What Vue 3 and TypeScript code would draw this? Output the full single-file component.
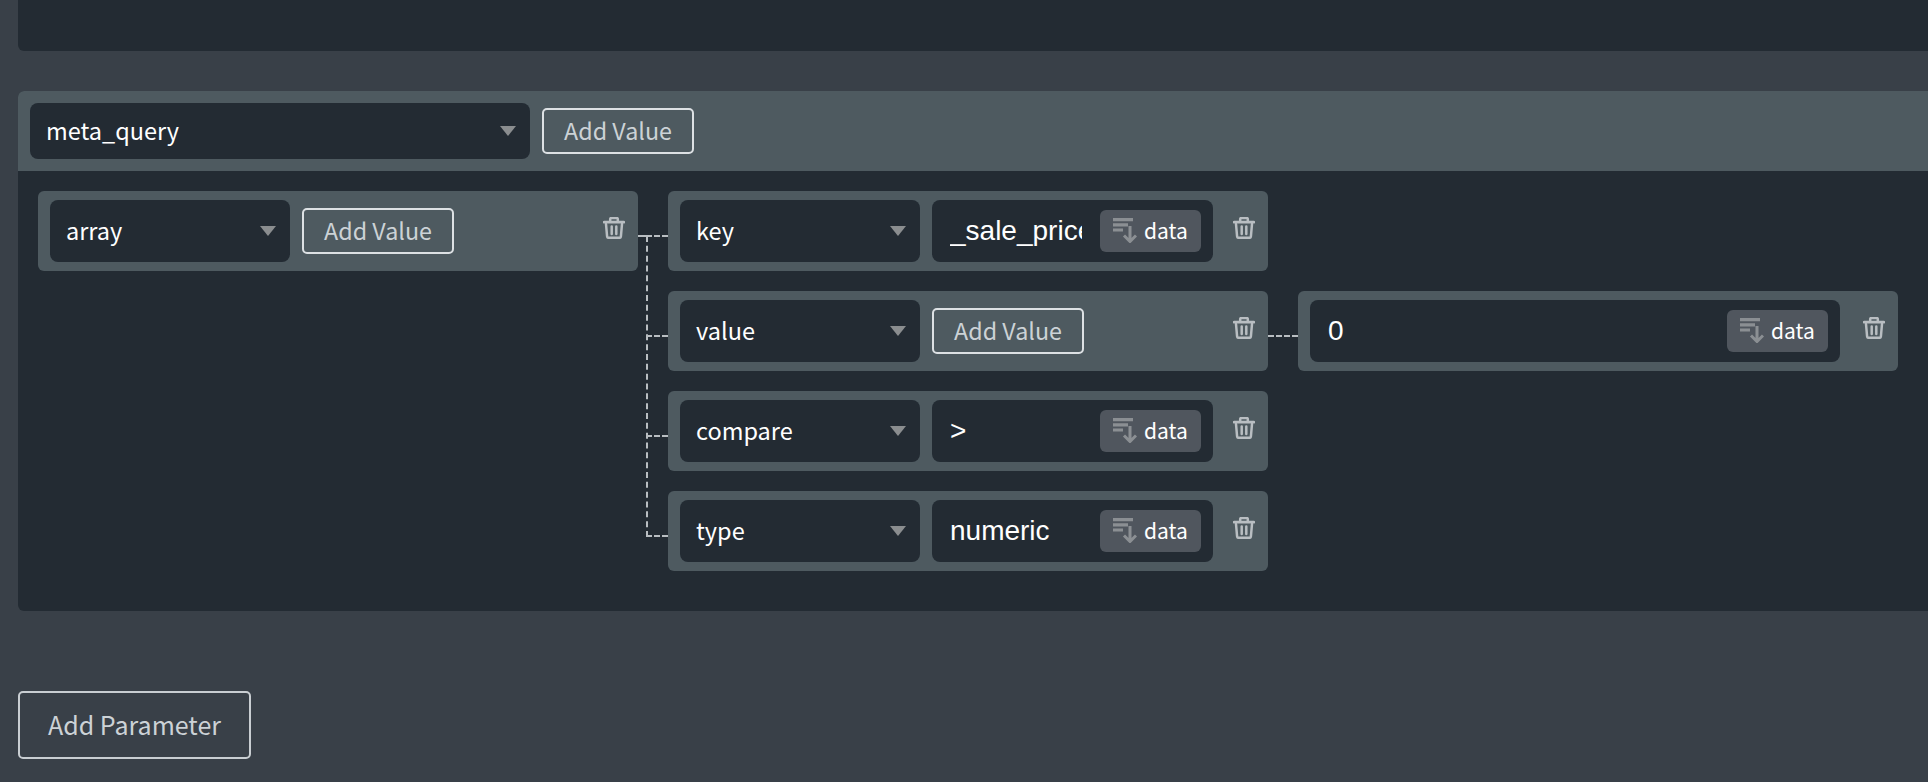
<script setup lang="ts">
interface Field {
  name: string
  value?: string
  child?: string
  addOnly?: boolean
}

const fields: Field[] = [
  { name: 'key', value: '_sale_price' },
  { name: 'value', addOnly: true, child: '0' },
  { name: 'compare', value: '>' },
  { name: 'type', value: 'numeric' },
]
</script>

<template>
  <div class="page">
    <svg class="defs" aria-hidden="true">
      <symbol id="icon-trash" viewBox="0 0 22 22">
        <path class="line" d="M7.200 4V2.100a1 1 0 0 1 1-1h5.600a1 1 0 0 1 1 1V4" />
        <path class="line thick" d="M1.200 5.200h19.600" />
        <path class="line" d="M3 7l1.100 12.500a1.400 1.400 0 0 0 1.400 1.300h11a1.400 1.400 0 0 0 1.400-1.300L19 7" />
        <path class="line" d="M8.700 9.500v7.500M13.300 9.500v7.500" />
      </symbol>
      <symbol id="icon-data" viewBox="0 0 24 25">
        <path class="solid" d="M0 0h20v3.200H0zM0 5.200h15v3.200H0zM0 10.400h10v3.200H0z" />
        <path class="line arrow" d="M17 8v15.500M11 17.500l6 6 6-6" />
      </symbol>
    </svg>

    <div class="panel panel-top"></div>

    <section class="panel panel-query">
      <header class="query-head">
        <div class="select select-wide">meta_query<i class="caret"></i></div>
        <button class="add">Add Value</button>
      </header>

      <div class="tree">
        <div class="node">
          <div class="select">array<i class="caret"></i></div>
          <button class="add">Add Value</button>
          <svg class="trash"><use href="#icon-trash" /></svg>
        </div>

        <div class="branches">
          <div v-for="field in fields" :key="field.name" class="branch">
            <div class="node">
              <div class="select">{{ field.name }}<i class="caret"></i></div>
              <button v-if="field.addOnly" class="add">Add Value</button>
              <div v-else class="field">
                <input class="value" readonly :value="field.value" />
                <button class="data">
                  <svg class="data-icon"><use href="#icon-data" /></svg>
                  <span>data</span>
                </button>
              </div>
              <svg class="trash"><use href="#icon-trash" /></svg>
            </div>

            <div v-if="field.child" class="node node-child">
              <div class="field field-wide">
                <input class="value" readonly :value="field.child" />
                <button class="data">
                  <svg class="data-icon"><use href="#icon-data" /></svg>
                  <span>data</span>
                </button>
              </div>
              <svg class="trash"><use href="#icon-trash" /></svg>
            </div>
          </div>
        </div>
      </div>
    </section>

    <button class="add add-param">Add Parameter</button>
  </div>
</template>

<style>
html,
body {
  margin: 0;
  background: #394048;
  overflow: hidden;
}

.line {
  fill: none;
  stroke: #b9bec2;
  stroke-width: 2.500;
  stroke-linecap: round;
  stroke-linejoin: round;
}

.line.thick {
  stroke-width: 2.800;
}

.line.arrow {
  stroke: #8b8f93;
  stroke-width: 3;
  stroke-linecap: butt;
  stroke-linejoin: miter;
}

.solid {
  fill: #8b8f93;
}
</style>

<style scoped>
.defs {
  position: absolute;
  width: 0;
  height: 0;
}

.page {
  box-sizing: border-box;
  width: 1928px;
  height: 782px;
  padding-left: 18px;
  background: #394048;
  font-family: "Noto Sans CJK JP", "Noto Sans", sans-serif;
  overflow: hidden;
}

.panel {
  background: #232b33;
  border-radius: 0 0 0 6px;
}

.panel-top {
  height: 51px;
  margin-bottom: 40px;
}

.panel-query {
  height: 520px;
  border-radius: 6px 0 0 6px;
}

.query-head {
  display: flex;
  align-items: center;
  gap: 12px;
  box-sizing: border-box;
  height: 80px;
  padding: 0 12px;
  background: #4e5a60;
  border-radius: 6px 0 0 0;
}

.select {
  position: relative;
  display: flex;
  align-items: center;
  box-sizing: border-box;
  flex: none;
  width: 240px;
  height: 62px;
  padding: 0 0 0 16px;
  background: #232b33;
  border-radius: 8px;
  color: #fff;
  font-size: 23.500px;
  line-height: 1;
}

.select-wide {
  width: 500px;
  height: 56px;
}

.caret {
  position: absolute;
  top: 50%;
  right: 14px;
  margin-top: -5px;
  border-left: 8px solid transparent;
  border-right: 8px solid transparent;
  border-top: 10px solid #8a8d8f;
}

.add {
  box-sizing: border-box;
  flex: none;
  width: 152px;
  height: 46px;
  padding: 0;
  background: transparent;
  border: 2px solid #dde1e4;
  border-radius: 5px;
  color: #ccd2d6;
  font-family: inherit;
  font-size: 23.300px;
  line-height: 1;
}

.add-param {
  display: block;
  width: 233px;
  height: 68px;
  margin-top: 80px;
  padding-bottom: 2px;
  border-color: #c9ced2;
  font-size: 25px;
}

.tree {
  display: flex;
  gap: 30px;
  align-items: flex-start;
  padding: 20px 0 0 20px;
}

.node {
  display: flex;
  align-items: center;
  gap: 12px;
  box-sizing: border-box;
  flex: none;
  width: 600px;
  height: 80px;
  padding: 0 13px 0 12px;
  background: #4e5a60;
  border-radius: 6px;
}

.branches {
  position: relative;
  display: flex;
  flex-direction: column;
  gap: 20px;
}

.branches::before {
  content: "";
  position: absolute;
  left: -22px;
  top: 45px;
  bottom: 34px;
  border-left: 2px dashed #b9bec2;
}

.branches::after {
  content: "";
  position: absolute;
  left: -30px;
  top: 44px;
  width: 8px;
  border-top: 2px dashed #b9bec2;
}

.branch {
  position: relative;
  display: flex;
  gap: 30px;
}

.branch::before {
  content: "";
  position: absolute;
  left: -22px;
  top: 44px;
  width: 22px;
  border-top: 2px dashed #b9bec2;
}

.node-child {
  position: relative;
}

.node-child::before {
  content: "";
  position: absolute;
  left: -30px;
  top: 44px;
  width: 30px;
  border-top: 2px dashed #b9bec2;
}

.field {
  display: flex;
  align-items: center;
  box-sizing: border-box;
  flex: none;
  width: 281px;
  height: 62px;
  padding: 0 12px 0 18px;
  background: #232b33;
  border-radius: 8px;
}

.field-wide {
  width: 530px;
}

.value {
  flex: 1;
  min-width: 0;
  padding: 0;
  background: transparent;
  border: 0;
  outline: 0;
  color: #fff;
  font-family: "Liberation Sans", Arial, sans-serif;
  font-size: 28px;
}

.data {
  display: flex;
  align-items: center;
  gap: 7px;
  box-sizing: border-box;
  flex: none;
  width: 101px;
  height: 42px;
  margin-left: 18px;
  padding: 0 0 1px 13px;
  background: #50565e;
  border: 0;
  border-radius: 6px;
  color: #fff;
  font-family: inherit;
  font-size: 21px;
  line-height: 1;
}

.data-icon {
  flex: none;
  width: 24px;
  height: 25px;
  margin-top: -1px;
}

.trash {
  flex: none;
  width: 22px;
  height: 22px;
  margin-left: auto;
  margin-bottom: 6px;
}
</style>
